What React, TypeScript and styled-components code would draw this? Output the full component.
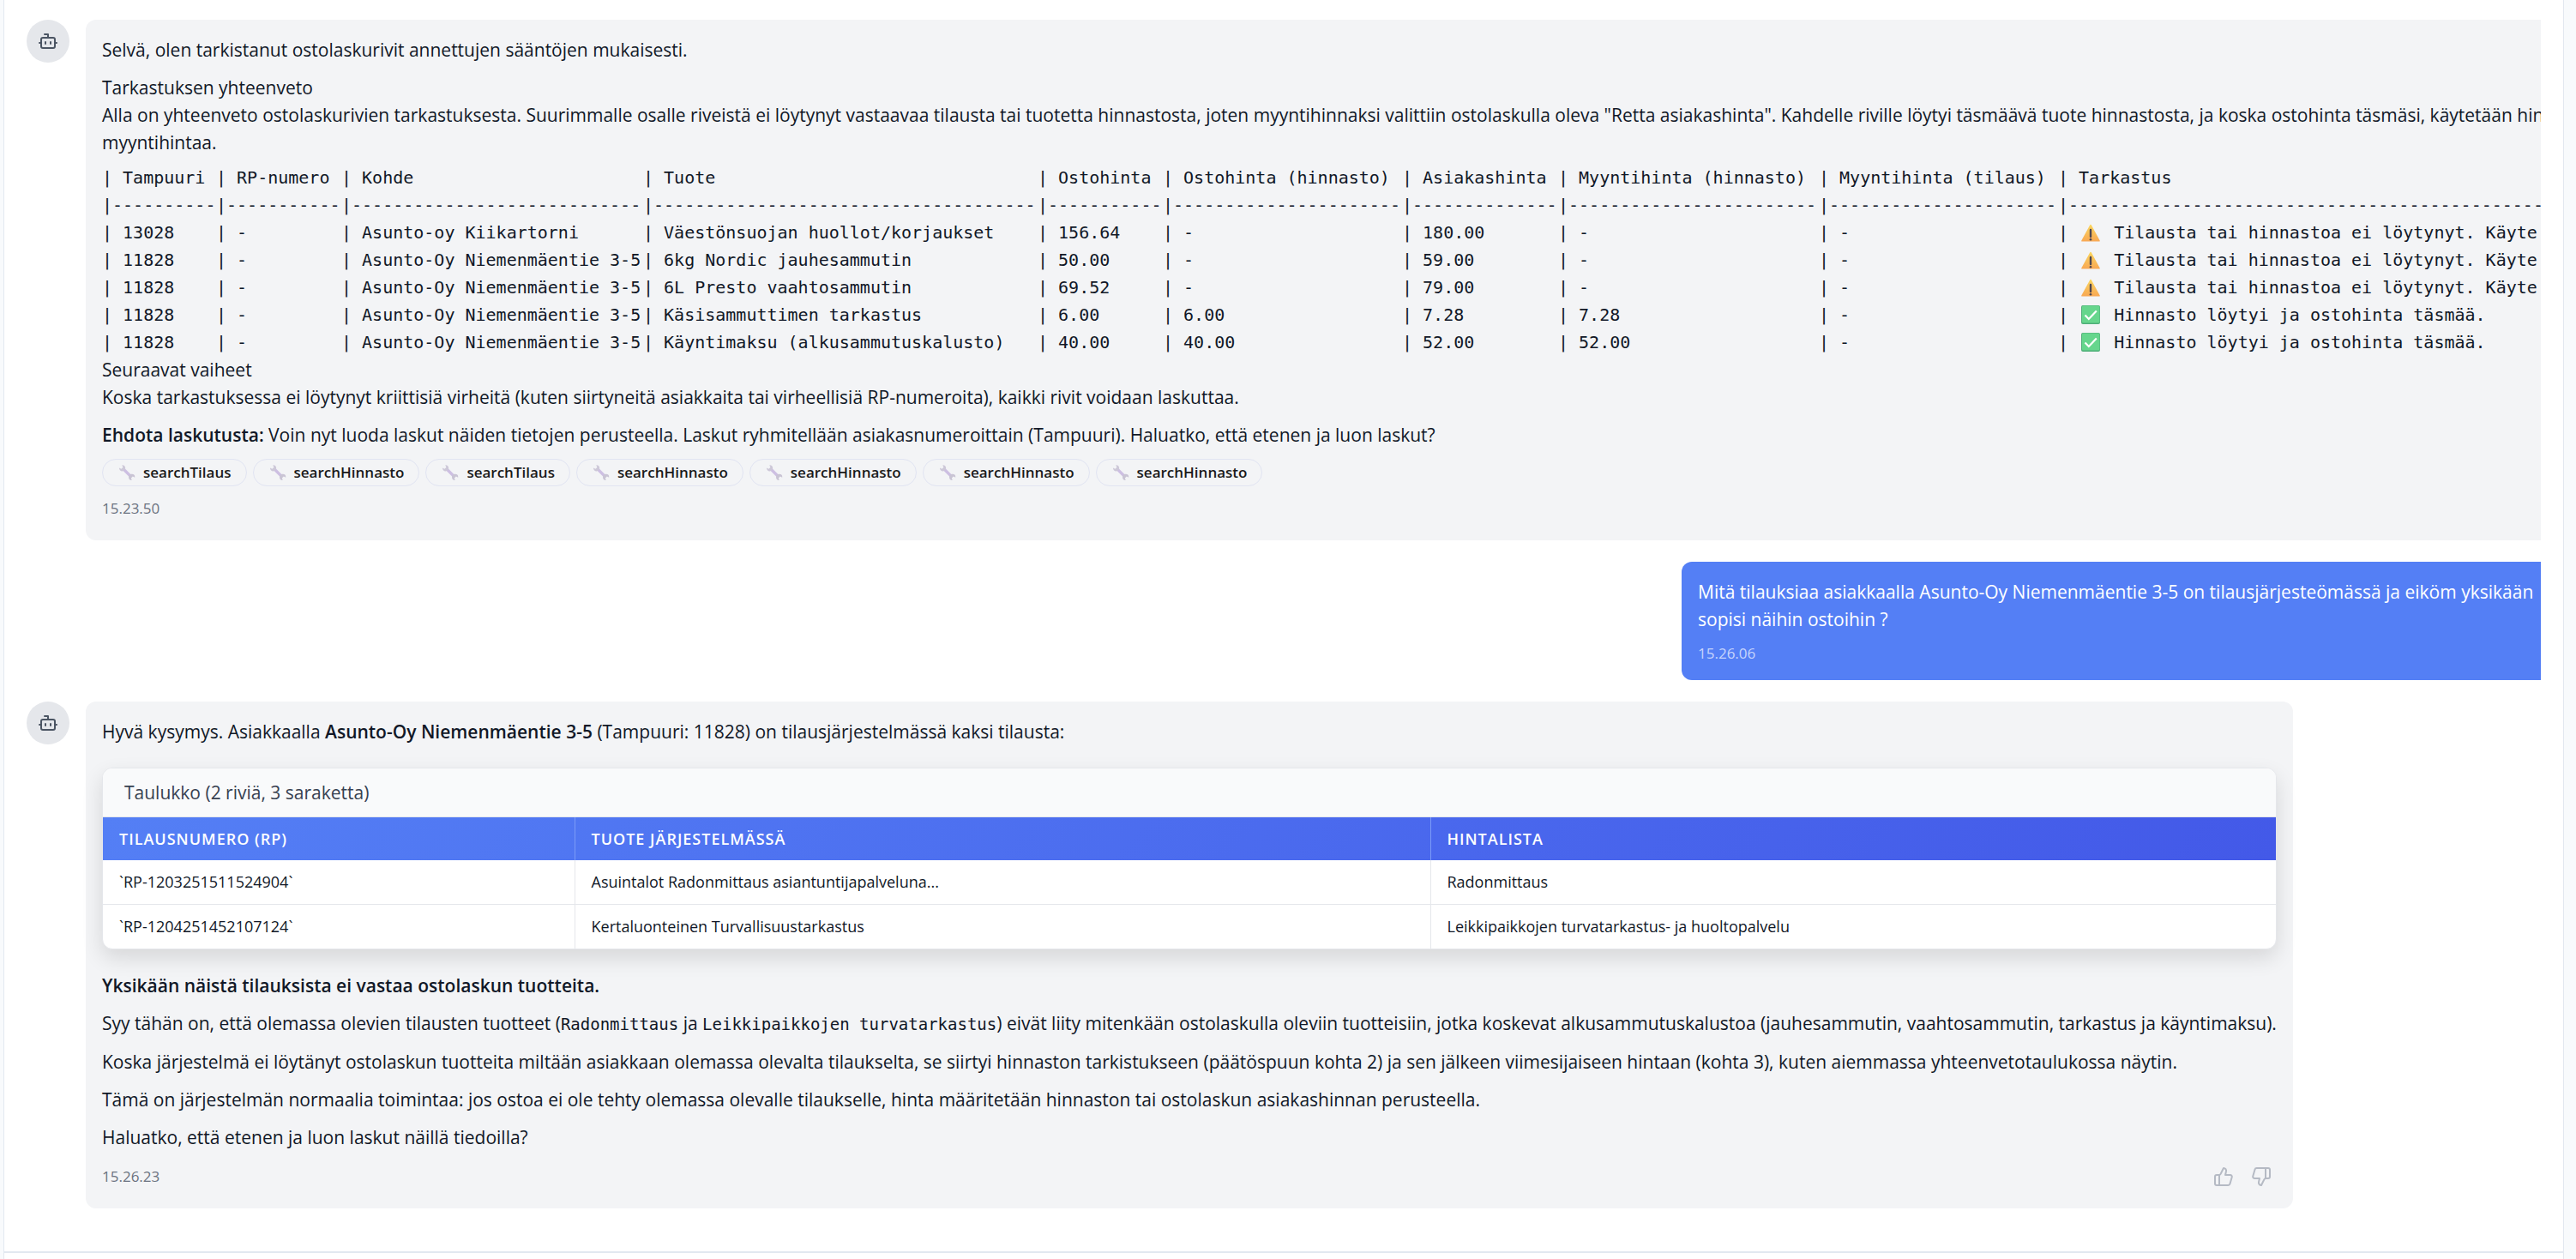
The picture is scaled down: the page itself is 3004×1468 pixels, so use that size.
import React from "react";
import styled, { createGlobalStyle } from "styled-components";
import { Bot, ThumbsDown, ThumbsUp } from "lucide-react";

const sans = '"Open Sans", "Noto Sans", sans-serif';
const mono = '"DejaVu Sans Mono", monospace';

const GlobalStyle = createGlobalStyle`
  *, *::before, *::after { box-sizing: border-box; }
  body {
    margin: 0;
    background: #f8fafc;
    color: #111827;
    font-family: ${sans};
    font-size: 21px;
    line-height: 32px;
  }
  p, pre { margin: 0; }
`;

const Panel = styled.main`
  display: flex;
  flex-direction: column;
  min-height: 100vh;
  margin: 0 14px 0 4px;
  background: #fff;
  border: solid #e2e8f0;
  border-width: 0 1px;
`;

const Messages = styled.section`
  padding: 23px 26px 50px;
`;

const Scroller = styled.div`
  overflow: hidden;
`;

const Thread = styled.div`
  display: flex;
  flex-direction: column;
  gap: 25px;
  width: calc(100% + 120px);
`;

const Composer = styled.footer`
  flex: 1;
  border-top: 2px solid #e2e8f0;
`;

const Row = styled.article<{ $own?: boolean }>`
  display: flex;
  align-items: flex-start;
  justify-content: ${(p) => (p.$own ? "flex-end" : "flex-start")};
  gap: 19px;
  padding-right: ${(p) => (p.$own ? "102px" : "0")};
`;

const Avatar = styled.div`
  display: flex;
  flex: none;
  align-items: center;
  justify-content: center;
  width: 50px;
  height: 50px;
  border-radius: 50%;
  background: #e5e7eb;
  color: #4b5563;
`;

const Bubble = styled.div<{ $own?: boolean; $fill?: boolean }>`
  display: flex;
  flex-direction: column;
  flex: ${(p) => (p.$fill ? "1" : "0 1 auto")};
  min-width: 0;
  max-width: ${(p) => (p.$own ? "1020px" : "none")};
  padding: 19px;
  border-radius: 12px;
  background: ${(p) => (p.$own ? "#547ff5" : "#f3f4f6")};
  color: ${(p) => (p.$own ? "#fff" : "inherit")};
`;

const Prose = styled.div`
  display: flex;
  flex-direction: column;
  gap: 12px;
`;

const Pre = styled.pre`
  margin: -3px 0 0;
  font-family: ${mono};
  font-size: 20px;
  line-height: 32px;
`;

const PreLine = styled.div`
  display: flex;
`;

const PreCell = styled.span<{ $width?: number }>`
  flex: none;
  width: ${(p) => (p.$width ? `${p.$width}px` : "auto")};
`;

const Mark = styled.svg`
  width: 24px;
  height: 24px;
  margin: 0 3px 0 2px;
  vertical-align: -5px;
`;

const Code = styled.code`
  font-family: ${mono};
  font-size: 19px;
`;

const Strong = styled.strong`
  font-weight: 600;
`;

const Chips = styled.ul`
  display: flex;
  flex-wrap: wrap;
  gap: 7px;
  margin: 12px 0 0;
  padding: 0;
  list-style: none;
`;

const Chip = styled.li`
  display: flex;
  align-items: center;
  gap: 9px;
  height: 32px;
  padding: 0 17px 0 18px;
  border: 1px solid #e1e4f2;
  border-radius: 16px;
  color: #1a1a1a;
  font-size: 17px;
  font-weight: 600;
`;

const WrenchArt = styled.svg`
  width: 20px;
  height: 20px;
`;

const Foot = styled.footer<{ $own?: boolean; $votes?: boolean }>`
  display: flex;
  align-items: center;
  justify-content: space-between;
  height: ${(p) => (p.$own ? "24px" : "36px")};
  margin-top: ${(p) => (p.$own || p.$votes ? "12px" : "8px")};
  color: ${(p) => (p.$own ? "#c7d5fc" : "#6b7280")};
  font-size: 17px;
`;

const Votes = styled.div`
  display: flex;
  gap: 8px;
`;

const Vote = styled.button`
  display: flex;
  padding: 6px;
  border: 0;
  background: none;
  color: #b5bac4;
  cursor: pointer;
`;

const Card = styled.section`
  margin: 14px 0;
  overflow: hidden;
  border: 1px solid #e5e7eb;
  border-radius: 12px;
  background: #fff;
  box-shadow: 0 10px 24px rgba(0, 0, 0, 0.12);
`;

const CardTitle = styled.header`
  padding: 12px 25px;
  border-bottom: 1px solid #e5e7eb;
  background: #f9fafb;
  color: #374151;
  font-weight: 500;
`;

const Table = styled.table`
  width: 100%;
  border-collapse: collapse;
  font-size: 18px;
  line-height: 26px;
  text-align: left;

  thead tr {
    background: linear-gradient(135deg, #547ff5, #4359e8);
    color: #fff;
  }
  tbody tr + tr {
    border-top: 1px solid #e5e7eb;
  }
`;

const Head = styled.th<{ $width?: string }>`
  width: ${(p) => p.$width ?? "auto"};
  padding: 12px 19px;
  font-weight: 600;
  letter-spacing: 1px;
  text-transform: uppercase;

  & + & { border-left: 1px solid #7b9bf7; }
`;

const Data = styled.td`
  padding: 12px 19px 13px;

  & + & { border-left: 1px solid #e5e7eb; }
`;

function Warning() {
  return (
    <Mark viewBox="0 0 24 24" role="img" aria-label="Varoitus">
      <defs>
        <linearGradient id="warn" x1="0" y1="0" x2="0" y2="1">
          <stop offset="0" stopColor="#fbd75f" />
          <stop offset="1" stopColor="#f8a854" />
        </linearGradient>
      </defs>
      <path d="M11.1 3.4a1 1 0 0 1 1.8 0L22.7 21.4c.3.6 0 1.1-.7 1.1H2c-.7 0-1-.5-.7-1.1z" fill="url(#warn)" />
      <path d="M12 9v8" stroke="#4f4650" strokeWidth="2.4" strokeLinecap="round" />
      <circle cx="12" cy="20.2" r="1.3" fill="#4f4650" />
    </Mark>
  );
}

function Check() {
  return (
    <Mark viewBox="0 0 24 24" role="img" aria-label="Kunnossa">
      <rect x="1" y="1" width="22" height="22" rx="2" fill="#4fae78" />
      <rect x="2" y="1.5" width="20.5" height="20" rx="1.5" fill="#66d68d" />
      <path d="m5.5 12.5 4.3 4.5L18.8 7.5" fill="none" stroke="#fff" strokeWidth="2.2" />
    </Mark>
  );
}

function WrenchIcon() {
  return (
    <WrenchArt viewBox="0 0 20 20" aria-hidden="true">
      <path d="M5.5 5.5 15 15" stroke="#cdbfe2" strokeWidth="3.2" />
      <path d="M4.3 1.2a3.6 3.6 0 1 1-3.3 3.3l2.4 1.3 2-1.9z" fill="#cdc8d8" />
      <path d="M15.7 19a3.6 3.6 0 1 1 3.5-3.2l-2.4-1.2-1.9 1.8z" fill="#c9c4d4" />
    </WrenchArt>
  );
}

const columnWidths = [133, 146, 352, 460, 146, 279, 182, 304, 279];
const headings = [
  "Tampuuri", "RP-numero", "Kohde", "Tuote", "Ostohinta", "Ostohinta (hinnasto)",
  "Asiakashinta", "Myyntihinta (hinnasto)", "Myyntihinta (tilaus)", "Tarkastus",
];
const dashes = [10, 11, 28, 37, 11, 22, 14, 24, 22, 46];
const missing = "Tilausta tai hinnastoa ei löytynyt. Käyte";
const found = "Hinnasto löytyi ja ostohinta täsmää.";

type Line = { cells: string[]; ok: boolean };
const lines: Line[] = [
  { ok: false, cells: ["13028", "-", "Asunto-oy Kiikartorni", "Väestönsuojan huollot/korjaukset", "156.64", "-", "180.00", "-", "-"] },
  { ok: false, cells: ["11828", "-", "Asunto-Oy Niemenmäentie 3-5", "6kg Nordic jauhesammutin", "50.00", "-", "59.00", "-", "-"] },
  { ok: false, cells: ["11828", "-", "Asunto-Oy Niemenmäentie 3-5", "6L Presto vaahtosammutin", "69.52", "-", "79.00", "-", "-"] },
  { ok: true, cells: ["11828", "-", "Asunto-Oy Niemenmäentie 3-5", "Käsisammuttimen tarkastus", "6.00", "6.00", "7.28", "7.28", "-"] },
  { ok: true, cells: ["11828", "-", "Asunto-Oy Niemenmäentie 3-5", "Käyntimaksu (alkusammutuskalusto)", "40.00", "40.00", "52.00", "52.00", "-"] },
];

const tools = [
  "searchTilaus", "searchHinnasto", "searchTilaus", "searchHinnasto",
  "searchHinnasto", "searchHinnasto", "searchHinnasto",
];

const orders = [
  ["`RP-1203251511524904`", "Asuintalot Radonmittaus asiantuntijapalveluna...", "Radonmittaus"],
  ["`RP-1204251452107124`", "Kertaluonteinen Turvallisuustarkastus", "Leikkipaikkojen turvatarkastus- ja huoltopalvelu"],
];

function CheckReport() {
  return (
    <Pre>
      <PreLine>
        {headings.map((text, i) => (
          <PreCell key={text} $width={columnWidths[i]}>{`| ${text}`}</PreCell>
        ))}
      </PreLine>
      <PreLine>
        {dashes.map((count, i) => (
          <PreCell key={i} $width={columnWidths[i]}>{`|${"-".repeat(count)}`}</PreCell>
        ))}
      </PreLine>
      {lines.map((line, row) => (
        <PreLine key={row}>
          {line.cells.map((text, i) => (
            <PreCell key={i} $width={columnWidths[i]}>{`| ${text}`}</PreCell>
          ))}
          <PreCell>
            {"| "}
            {line.ok ? <Check /> : <Warning />}
            {` ${line.ok ? found : missing}`}
          </PreCell>
        </PreLine>
      ))}
    </Pre>
  );
}

function BotAvatar() {
  return (
    <Avatar>
      <Bot size={24} aria-hidden="true" />
    </Avatar>
  );
}

export default function App() {
  return (
    <>
      <GlobalStyle />
      <Panel>
        <Messages>
          <Scroller>
            <Thread>
              <Row>
                <BotAvatar />
                <Bubble $fill>
                  <Prose>
                    <p>Selvä, olen tarkistanut ostolaskurivit annettujen sääntöjen mukaisesti.</p>
                    <p>
                      Tarkastuksen yhteenveto
                      <br />
                      Alla on yhteenveto ostolaskurivien tarkastuksesta. Suurimmalle osalle riveistä ei löytynyt vastaavaa tilausta tai tuotetta hinnastosta, joten myyntihinnaksi valittiin ostolaskulla oleva "Retta asiakashinta". Kahdelle riville löytyi täsmäävä tuote hinnastosta, ja koska ostohinta täsmäsi, käytetään hinnaston myyntihintaa.
                    </p>
                    <div>
                      <CheckReport />
                      <p>
                        Seuraavat vaiheet
                        <br />
                        Koska tarkastuksessa ei löytynyt kriittisiä virheitä (kuten siirtyneitä asiakkaita tai virheellisiä RP-numeroita), kaikki rivit voidaan laskuttaa.
                      </p>
                    </div>
                    <p>
                      <Strong>Ehdota laskutusta:</Strong> Voin nyt luoda laskut näiden tietojen perusteella. Laskut ryhmitellään asiakasnumeroittain (Tampuuri). Haluatko, että etenen ja luon laskut?
                    </p>
                  </Prose>
                  <Chips>
                    {tools.map((name, i) => (
                      <Chip key={i}>
                        <WrenchIcon />
                        {name}
                      </Chip>
                    ))}
                  </Chips>
                  <Foot><time>15.23.50</time></Foot>
                </Bubble>
              </Row>

              <Row $own>
                <Bubble $own>
                  <p>Mitä tilauksiaa asiakkaalla Asunto-Oy Niemenmäentie 3-5 on tilausjärjesteömässä ja eiköm yksikään sopisi näihin ostoihin ?</p>
                  <Foot $own><time>15.26.06</time></Foot>
                </Bubble>
              </Row>

              <Row>
                <BotAvatar />
                <Bubble>
                  <Prose>
                    <p>
                      Hyvä kysymys. Asiakkaalla <Strong>Asunto-Oy Niemenmäentie 3-5</Strong> (Tampuuri: 11828) on tilausjärjestelmässä kaksi tilausta:
                    </p>
                    <Card>
                      <CardTitle>Taulukko (2 riviä, 3 saraketta)</CardTitle>
                      <Table>
                        <thead>
                          <tr>
                            <Head scope="col" $width="550px">Tilausnumero (RP)</Head>
                            <Head scope="col" $width="998px">Tuote järjestelmässä</Head>
                            <Head scope="col">Hintalista</Head>
                          </tr>
                        </thead>
                        <tbody>
                          {orders.map((order) => (
                            <tr key={order[0]}>
                              {order.map((text) => <Data key={text}>{text}</Data>)}
                            </tr>
                          ))}
                        </tbody>
                      </Table>
                    </Card>
                    <p><Strong>Yksikään näistä tilauksista ei vastaa ostolaskun tuotteita.</Strong></p>
                    <p>
                      Syy tähän on, että olemassa olevien tilausten tuotteet (<Code>Radonmittaus</Code> ja <Code>Leikkipaikkojen turvatarkastus</Code>) eivät liity mitenkään ostolaskulla oleviin tuotteisiin, jotka koskevat alkusammutuskalustoa (jauhesammutin, vaahtosammutin, tarkastus ja käyntimaksu).
                    </p>
                    <p>Koska järjestelmä ei löytänyt ostolaskun tuotteita miltään asiakkaan olemassa olevalta tilaukselta, se siirtyi hinnaston tarkistukseen (päätöspuun kohta 2) ja sen jälkeen viimesijaiseen hintaan (kohta 3), kuten aiemmassa yhteenvetotaulukossa näytin.</p>
                    <p>Tämä on järjestelmän normaalia toimintaa: jos ostoa ei ole tehty olemassa olevalle tilaukselle, hinta määritetään hinnaston tai ostolaskun asiakashinnan perusteella.</p>
                    <p>Haluatko, että etenen ja luon laskut näillä tiedoilla?</p>
                  </Prose>
                  <Foot $votes>
                    <time>15.26.23</time>
                    <Votes>
                      <Vote type="button" aria-label="Hyvä vastaus"><ThumbsUp size={24} /></Vote>
                      <Vote type="button" aria-label="Huono vastaus"><ThumbsDown size={24} /></Vote>
                    </Votes>
                  </Foot>
                </Bubble>
              </Row>
            </Thread>
          </Scroller>
        </Messages>
        <Composer />
      </Panel>
    </>
  );
}
